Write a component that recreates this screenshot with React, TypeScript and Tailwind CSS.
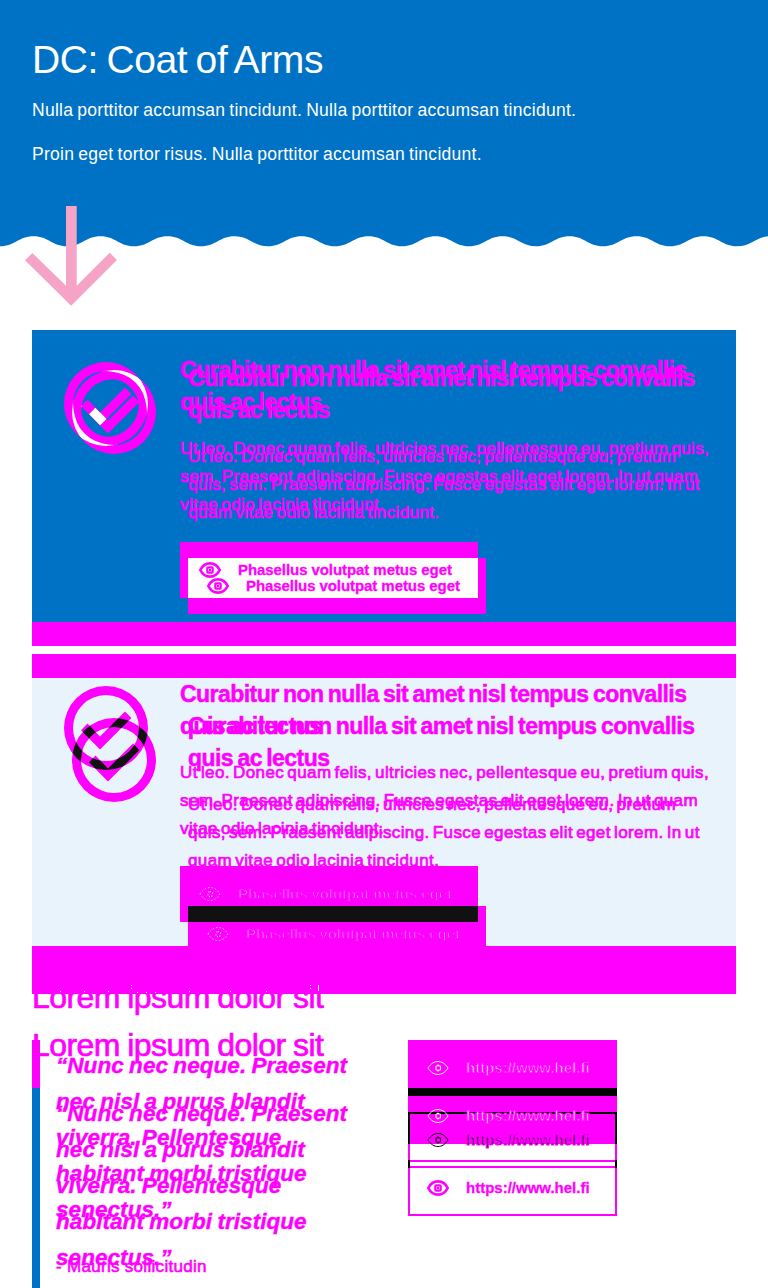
import type { ReactNode } from "react";

const WAVE_PERIODS = Array.from({ length: 12 }, (_, i) => i);
const RING =
  "M-42 0a42 42 0 1 0 84 0a42 42 0 1 0 -84 0ZM-33 0a33 33 0 1 1 66 0a33 33 0 1 1 -66 0Z";
const TICK = "M-18.5 -4.5L-25 2.3L-6 21.6L25.4 -10L19 -16.6L-6 8.4Z";

function Eye({ className }: { className: string }) {
  return (
    <svg viewBox="0 0 24 18" className={`h-[18px] w-6 shrink-0 fill-none ${className}`}>
      <path d="M2 9C5 4.3 8.3 2.5 12 2.5S19 4.3 22 9C19 13.7 15.7 15.5 12 15.5S5 13.7 2 9Z" />
      <path d="M10 7H11.5V6H12.5V7H14.5V11H12.5V12H11.5V11H10Z" />
    </svg>
  );
}

function EyeSolid() {
  return (
    <svg viewBox="0 0 24 18" className="h-[18px] w-6 shrink-0">
      <path
        d="M2.3 9C4.5 4.6 8 2.4 12 2.4S19.5 4.6 21.7 9C19.5 13.4 16 15.6 12 15.6S4.5 13.4 2.3 9Z"
        fill="none"
        stroke="#f0f"
        strokeWidth="2.7"
      />
      <rect x="9.3" y="6.3" width="5.4" height="5.4" rx="1" fill="none" stroke="#f0f" strokeWidth="2.2" />
      <rect x="11" y="8" width="2" height="2" fill="#f0f" />
    </svg>
  );
}

function Heading() {
  return (
    <h2 className="text-[23px] leading-8 font-bold tracking-[-0.55px] [word-spacing:-1.5px] whitespace-nowrap [-webkit-text-stroke:0.5px_#f0f]">
      Curabitur non nulla sit amet nisl tempus convallis
      <br />
      quis ac lectus
    </h2>
  );
}

function Copy({ children }: { children: ReactNode }) {
  return (
    <p className="mt-[17px] -mb-px text-[17px] leading-7 tracking-[0.4px] [word-spacing:-2px] whitespace-nowrap [-webkit-text-stroke:0.7px_#f0f]">
      {children}
    </p>
  );
}

function CheckPair({ id, dy, overlap, band }: { id: string; dy: number; overlap: string; band: boolean }) {
  return (
    <svg viewBox="-42 -42 92 124" className="mt-8 h-[124px] w-[92px]">
      <clipPath id={id}>
        <path d={RING} clipRule="evenodd" />
        <path d={TICK} />
      </clipPath>
      <g fill="#f0f" fillRule="evenodd">
        <path d={RING} />
        <path d={TICK} />
        <g transform={`translate(8 ${dy})`}>
          <path d={RING} />
          <path d={TICK} />
        </g>
      </g>
      <g clipPath={`url(#${id})`}>
        <g transform={`translate(8 ${dy})`} fill={overlap} fillRule="evenodd">
          <path d={RING} />
          <path d={TICK} />
        </g>
      </g>
      {band && <circle cx="4" cy="4" r="32.5" fill="none" stroke="#f0f" strokeWidth="7" />}
    </svg>
  );
}

function LinkLabel({ dark }: { dark: boolean }) {
  return (
    <>
      {dark ? <Eye className="stroke-[#e8f3fc] stroke-[0.8] [stroke-dasharray:1.5_2]" /> : <EyeSolid />}
      <span
        className={
          dark
            ? "text-[15px] font-bold tracking-[-0.07px] whitespace-nowrap text-[#e8f3fc] [-webkit-text-stroke:1.5px_#f0f]"
            : "text-[15px] font-bold tracking-[-0.07px] whitespace-nowrap [-webkit-text-stroke:0.3px_#f0f]"
        }
      >
        Phasellus volutpat metus eget
      </span>
    </>
  );
}

function Card({ dark }: { dark: boolean }) {
  return (
    <section
      className={
        dark
          ? "grid h-[340px] grid-cols-1 grid-rows-[24px_268px_48px] overflow-hidden bg-[#e8f3fc]"
          : "grid h-[316px] grid-cols-1 grid-rows-[292px_24px] overflow-hidden bg-[#0072c6]"
      }
    >
      {dark && <div className="bg-[#f0f]" />}
      <div
        className={`grid grid-cols-1 grid-rows-[188px_1fr] overflow-hidden ${dark ? "" : "pt-6"}`}
      >
        <div className="grid grid-cols-1 content-start text-[#f0f] *:col-start-1 *:row-start-1">
          <div className={`pl-[156px] ${dark ? "pt-8" : "pt-2"}`}>
            <Heading />
            <Copy>
              Ut leo. Donec quam felis, ultricies nec, pellentesque eu, pretium
              <br />
              quis, sem. Praesent adipiscing. Fusce egestas elit eget lorem. In ut
              <br />
              quam vitae odio lacinia tincidunt.
            </Copy>
          </div>
          <div className="pl-[148px]">
            <Heading />
            <Copy>
              Ut leo. Donec quam felis, ultricies nec, pellentesque eu, pretium quis,
              <br />
              sem. Praesent adipiscing. Fusce egestas elit eget lorem. In ut quam
              <br />
              vitae odio lacinia tincidunt.
            </Copy>
          </div>
          <div className="h-0 pl-8">
            <div className="-mt-6">
              <CheckPair
                id={dark ? "check-dark" : "check-light"}
                dy={dark ? 32 : 8}
                overlap={dark ? "#111" : "#fff"}
                band={!dark}
              />
            </div>
          </div>
        </div>
        <div className="grid grid-cols-1 content-start *:col-start-1 *:row-start-1">
          <div className="ml-[148px] h-14 w-[298px] bg-[#f0f]" />
          <div className={`ml-[156px] h-14 w-[298px] bg-[#f0f] ${dark ? "mt-10" : "mt-4"}`} />
          <div className={`ml-[156px] w-[290px] ${dark ? "mt-10 h-4 bg-[#111]" : "mt-4 h-10 bg-white"}`} />
          <div className="ml-[166px] flex h-14 items-center gap-4 text-[#f0f]">
            <LinkLabel dark={dark} />
          </div>
          <div
            className={`ml-[174px] flex h-14 items-center gap-4 text-[#f0f] ${dark ? "mt-10" : "mt-4"}`}
          >
            <LinkLabel dark={dark} />
          </div>
        </div>
      </div>
      <div className="bg-[#f0f]" />
    </section>
  );
}

function Quote() {
  return (
    <p className="text-[22.5px] leading-9 font-bold tracking-[0.06px] [word-spacing:-1px] whitespace-nowrap italic [-webkit-text-stroke:0.4px_#f0f]">
      “Nunc nec neque. Praesent
      <br />
      nec nisl a purus blandit
      <br />
      viverra. Pellentesque
      <br />
      habitant morbi tristique
      <br />
      senectus.”
    </p>
  );
}

const SPECKS = [
  [99, 0], [99, 3], [28, 6], [52, 6], [76, 6], [105, 7], [114, 7], [123, 7],
  [157, 6], [198, 6], [234, 6], [278, 0], [278, 3], [286, 0], [286, 1],
  [286, 2], [286, 3], [286, 4], [286, 5],
];

export default function App() {
  return (
    <div className="h-[1288px] w-[768px] overflow-hidden bg-white font-['Liberation_Sans',Arial,sans-serif]">
      <header className="relative h-[330px]">
        <div className="h-[236px] bg-[#0072c6] px-8 pt-9 text-white">
          <h1 className="text-[39px] leading-[48px] tracking-[-0.4px] [word-spacing:-2px]">DC: Coat of Arms</h1>
          <p className="mt-3 text-[17.5px] leading-7 tracking-[0.27px] [word-spacing:-1px]">
            Nulla porttitor accumsan tincidunt. Nulla porttitor accumsan tincidunt.
          </p>
          <p className="mt-4 text-[17.5px] leading-7 tracking-[0.27px] [word-spacing:-1px]">
            Proin eget tortor risus. Nulla porttitor accumsan tincidunt.
          </p>
        </div>
        <svg viewBox="0 0 768 11" className="block h-[11px] w-[768px] fill-[#0072c6]">
          {WAVE_PERIODS.map((i) => (
            <path
              key={i}
              transform={`translate(${i * 67} 0)`}
              d="M0 0V10.2C15 10.2 18.5 0.2 33.5 0.2S52 10.2 67 10.2V0Z"
            />
          ))}
        </svg>
        <svg
          viewBox="0 0 92 100"
          className="absolute top-[206px] left-[25px] h-[100px] w-[92px] fill-[#f5a3c7]"
        >
          <path d="M41 0H51.7V79.8L84.7 46.7L92 54L46.2 99.7L0 54.3L7.4 47L41 79.8Z" />
        </svg>
      </header>

      <main className="px-8">
        <Card dark={false} />
        <div className="h-2" />
        <Card dark />

        <div className="relative -mt-[21px] h-[67px] text-[#f0f]">
          <div className="text-[32px] leading-[48px] tracking-[-0.55px] [word-spacing:-1px] whitespace-nowrap [-webkit-text-stroke:0.7px_#f0f]">
            <h2>Lorem ipsum dolor sit</h2>
            <h2>Lorem ipsum dolor sit</h2>
          </div>
          <svg viewBox="0 0 704 21" className="absolute top-0 left-0 h-[21px] w-[704px] fill-white">
            {SPECKS.map(([x, y]) => (
              <rect key={`${x}-${y}`} x={x} y={y + 12} width="1" height="1" />
            ))}
          </svg>
        </div>

        <div className="grid grid-cols-[376px_209px]">
          <div className="flex h-[248px]">
            <div className="flex w-2 flex-col">
              <div className="h-12 bg-[#f0f]" />
              <div className="grow bg-[#0072c6]" />
            </div>
            <div className="grid grow content-start pt-2 pl-4 text-[#f0f] *:col-start-1 *:row-start-1">
              <Quote />
              <div className="pt-12">
                <Quote />
              </div>
              <p className="pt-[205px] text-[17px] leading-7 tracking-[0.3px] [-webkit-text-stroke:0.6px_#f0f]">
                - Mauris sollicitudin
              </p>
            </div>
          </div>

          <div className="grid content-start text-[15px] font-bold *:col-start-1 *:row-start-1">
            <div>
              <div className="h-12 bg-[#f0f]" />
              <div className="h-2 bg-black" />
              <div className="h-12 bg-[#f0f]" />
              <div className="h-4 border-x-2 border-[#f0f]" />
              <div className="h-2 border-x-2 border-black">
                <div className="flex h-full flex-col justify-between">
                  <div className="h-0.5 bg-[#f0f]" />
                  <div className="h-0.5 bg-[#f0f]" />
                </div>
              </div>
              <div className="h-12 border-x-2 border-b-2 border-[#f0f]" />
            </div>
            <div className="mt-[72px] h-8 border-x-2 border-t-2 border-black" />
            <div className="flex h-14 items-center gap-4 pl-[18px] text-white [-webkit-text-stroke:1.1px_#f0f]">
              <Eye className="stroke-white stroke-1" />
              https://www.hel.fi
            </div>
            <div className="mt-12 flex h-14 items-center gap-4 pl-[18px] text-white [-webkit-text-stroke:1.1px_#f0f]">
              <Eye className="stroke-white stroke-1" />
              https://www.hel.fi
            </div>
            <div className="mt-[72px] flex h-14 items-center gap-4 pl-[18px] text-black [-webkit-text-stroke:1.1px_#f0f]">
              <Eye className="stroke-black stroke-1" />
              https://www.hel.fi
            </div>
            <div className="mt-[120px] flex h-14 items-center gap-4 pl-[18px] text-[#f0f] [-webkit-text-stroke:0.3px_#f0f]">
              <EyeSolid />
              https://www.hel.fi
            </div>
          </div>
        </div>
      </main>
    </div>
  );
}
